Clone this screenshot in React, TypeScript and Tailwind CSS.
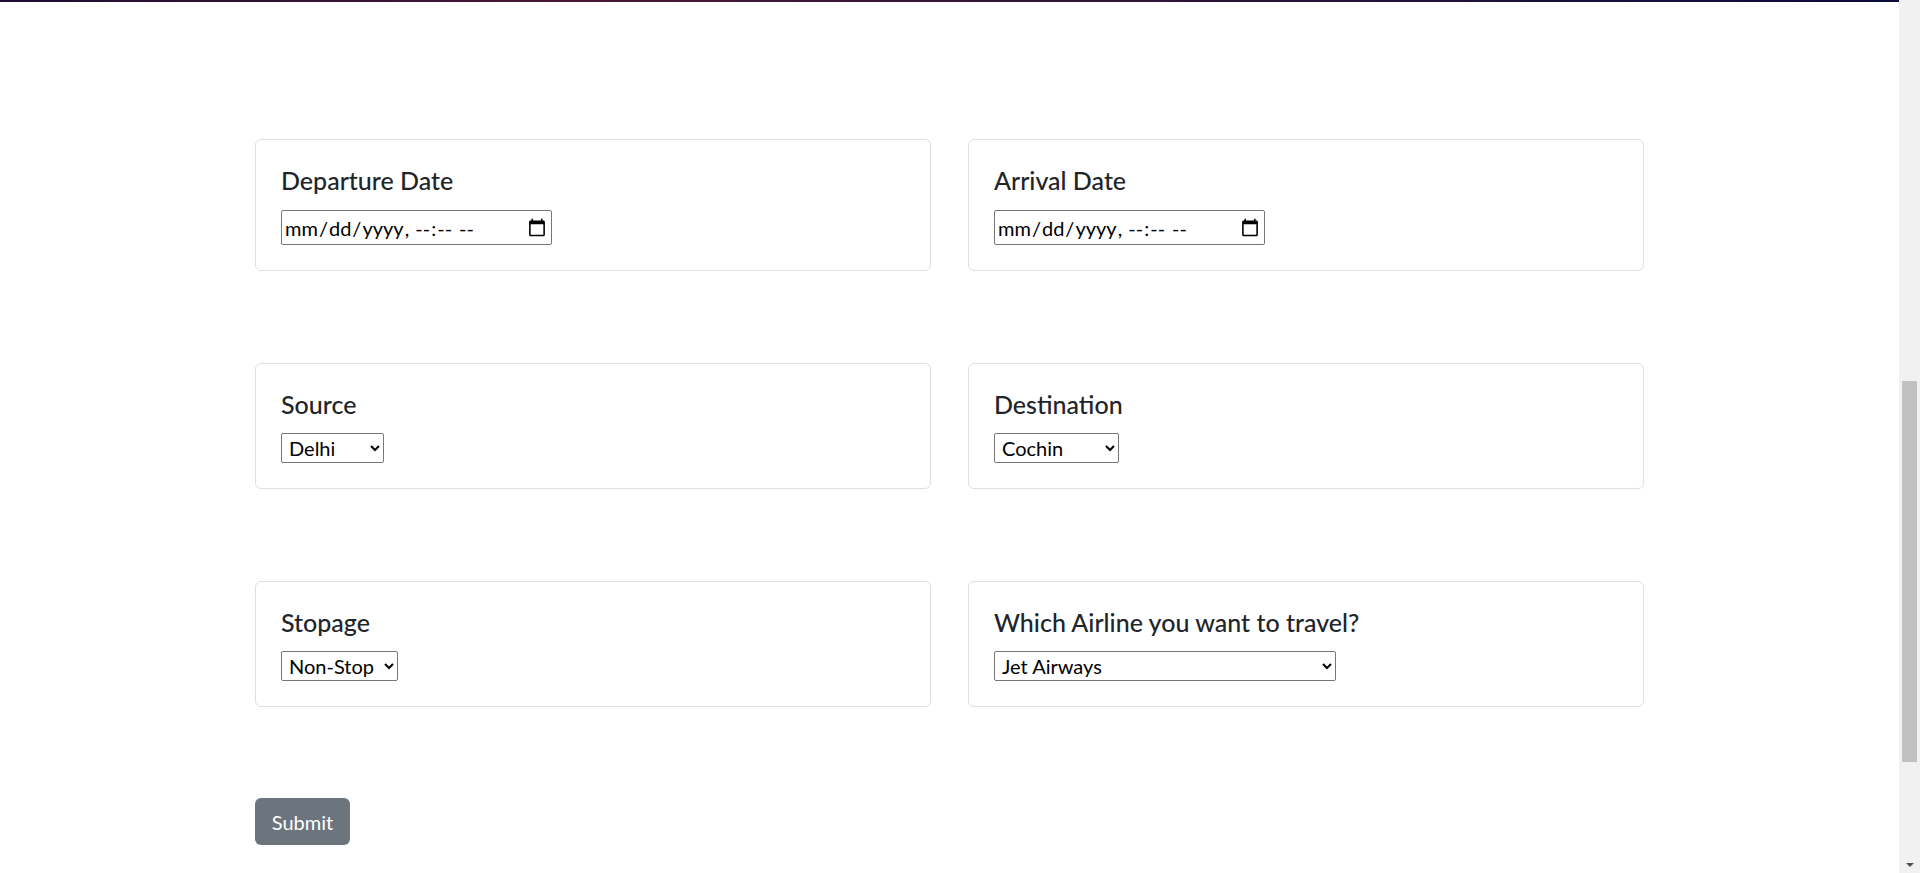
const sources = ['Delhi', 'Kolkata', 'Mumbai', 'Chennai', 'Banglore']
const destinations = ['Cochin', 'Banglore', 'Delhi', 'New Delhi', 'Hyderabad', 'Kolkata']
const stops = ['Non-Stop', '1', '2', '3', '4']
const airlines = [
  'Jet Airways',
  'IndiGo',
  'Air India',
  'Multiple carriers',
  'SpiceJet',
  'Vistara',
  'Air Asia',
  'GoAir',
  'Multiple carriers Premium economy',
  'Jet Airways Business',
  'Vistara Premium economy',
  'Trujet',
]

function Card({ title, children }: { title: string; children: React.ReactNode }) {
  return (
    <div className="rounded-[6px] border border-[#dfdfdf] bg-white px-[25px] py-[25px]">
      <h5 className="text-[25px] leading-[30px] font-medium text-[#212529]">{title}</h5>
      {children}
    </div>
  )
}

function Select({ options, width }: { options: string[]; width: string }) {
  return (
    <select
      className={`mt-[14px] block h-[30px] rounded-[2px] border border-[#767676] bg-white pl-[3px] text-[20px] text-black ${width}`}
      defaultValue={options[0]}
    >
      {options.map((o) => (
        <option key={o} value={o}>
          {o}
        </option>
      ))}
    </select>
  )
}

function DateInput() {
  return (
    <input
      type="datetime-local"
      className="mt-[15px] block h-[35px] w-[271px] rounded-[2px] border border-[#767676] bg-white px-[2px] text-[20px] text-black"
    />
  )
}

export default function App() {
  return (
    <div className="flex h-[873px] w-full overflow-hidden bg-white" style={{ fontFamily: 'Lato, "Open Sans", sans-serif' }}>
      <div className="flex-1">
        <div className="h-[2px] bg-linear-to-r from-[#1e0c34] via-[#4a1634] via-30% to-[#0a0a3c]" />

        <form className="ml-[255px] w-[1389px] pt-[137px]" onSubmit={(e) => e.preventDefault()}>
          <div className="grid grid-cols-2 gap-x-[37px] gap-y-[92px]">
            <Card title="Departure Date">
              <DateInput />
            </Card>
            <Card title="Arrival Date">
              <DateInput />
            </Card>
            <Card title="Source">
              <Select options={sources} width="w-[103px]" />
            </Card>
            <Card title="Destination">
              <Select options={destinations} width="w-[125px]" />
            </Card>
            <Card title="Stopage">
              <Select options={stops} width="w-[117px]" />
            </Card>
            <Card title="Which Airline you want to travel?">
              <Select options={airlines} width="w-[342px]" />
            </Card>
          </div>

          <button
            type="submit"
            className="mt-[91px] h-[47px] w-[95px] rounded-[6px] bg-[#6c757d] text-[20px] text-white"
          >
            Submit
          </button>
        </form>
      </div>

      {/* fake browser scrollbar */}
      <div className="flex w-[21px] flex-col bg-[#f1f1f1]">
        <div className="h-[381px]" />
        <div className="ml-[3px] h-[381px] w-[15px] bg-[#c1c1c1]" />
        <div className="flex flex-1 items-end justify-center pb-[6px]">
          <div className="h-0 w-0 border-x-[4px] border-t-[4px] border-x-transparent border-t-[#505050]" />
        </div>
      </div>
    </div>
  )
}
